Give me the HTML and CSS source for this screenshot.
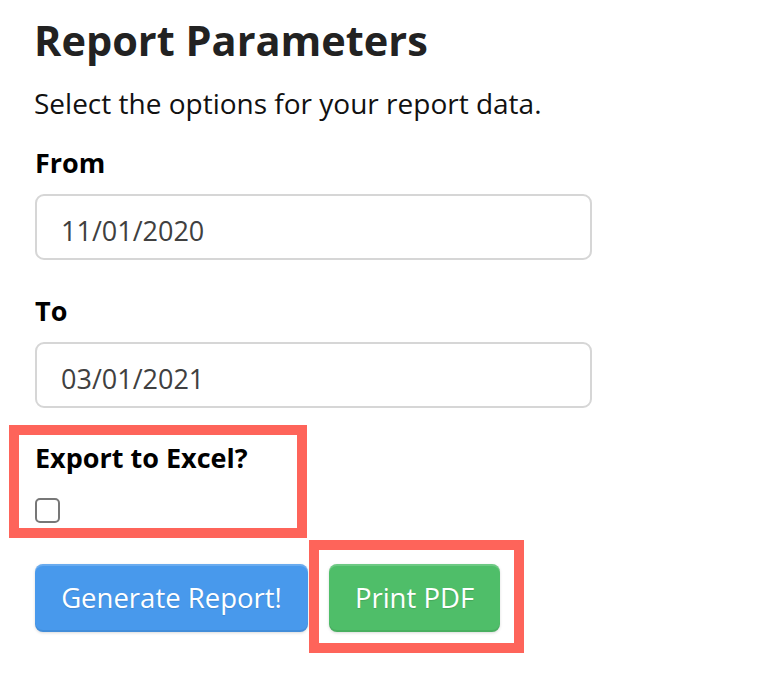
FILE: index.html
```html
<!DOCTYPE html>
<html lang="en">
<head>
<meta charset="utf-8">
<title>Report Parameters</title>
<link rel="stylesheet" href="styles.css">
</head>
<body>
<main class="page">
  <h1 class="title">Report Parameters</h1>
  <p class="lead">Select the options for your report data.</p>

  <label class="field-label" for="from">From</label>
  <input class="date-input" id="from" type="text" value="11/01/2020">

  <label class="field-label field-label--spaced" for="to">To</label>
  <input class="date-input" id="to" type="text" value="03/01/2021">

  <div class="highlight highlight--export">
    <label class="field-label field-label--export" for="excel">Export to Excel?</label>
    <input class="check" id="excel" type="checkbox">
  </div>

  <div class="actions">
    <button class="btn btn--blue" type="button">Generate Report!</button>
    <div class="highlight highlight--pdf">
      <button class="btn btn--green" type="button">Print PDF</button>
    </div>
  </div>
</main>
</body>
</html>
```

FILE: styles.css
```css
* { box-sizing: border-box; }

html, body {
  margin: 0;
  background: #ffffff;
}

body {
  font-family: "Open Sans", "Noto Sans", "Liberation Sans", sans-serif;
  color: #111;
}

.page {
  padding: 16px 0 0 35px;
  display: flex;
  flex-direction: column;
  align-items: flex-start;
}

.title {
  margin: 0 0 0 -1px;
  font-size: 41.5px;
  line-height: 48px;
  font-weight: 700;
  color: #222;
}

.lead {
  margin: 19px 0 0 -1px;
  font-size: 28px;
  line-height: 40px;
  color: #111;
}

.field-label {
  display: block;
  margin-top: 20px;
  font-size: 27px;
  line-height: 40px;
  font-weight: 700;
  color: #000;
}

.field-label--spaced { margin-top: 31px; }
.field-label--export { margin-top: 3px; }

.date-input {
  display: block;
  margin-top: 11px;
  width: 557px;
  height: 66px;
  padding: 6px 24px 0 24px;
  border: 2px solid #d6d6d6;
  border-radius: 9px;
  font-family: inherit;
  font-size: 27px;
  color: #404040;
  background: #fff;
  outline: none;
}

.highlight {
  border: 10px solid #fe645a;
}

.highlight--export {
  margin: 17px 0 0 -26px;
  width: 298px;
  padding: 0 0 5px 16px;
}

.check {
  display: block;
  appearance: none;
  -webkit-appearance: none;
  margin: 20px 0 0 0;
  width: 25px;
  height: 25px;
  border: 2px solid #777;
  border-radius: 5px;
  background: #fff;
}

.actions {
  margin-top: 2px;
  display: flex;
  align-items: flex-start;
}

.highlight--pdf {
  margin-left: 1px;
  padding: 14px 14px 11px 10px;
}

.btn {
  height: 68px;
  padding: 0 25px;
  border: none;
  border-radius: 8px;
  font-family: inherit;
  font-size: 27.5px;
  line-height: 68px;
  color: #fff;
  text-shadow: 0 1px 1px rgba(0, 0, 0, 0.12);
  box-shadow: inset 0 2px 0 rgba(255, 255, 255, 0.18),
              inset 0 -2px 0 rgba(0, 0, 0, 0.08),
              0 1px 3px rgba(0, 0, 0, 0.15);
  cursor: pointer;
}

.btn--blue {
  margin-top: 24px;
  width: 273px;
  background: #4899ec;
}

.btn--green {
  width: 171px;
  background: #4fbe69;
}
```
